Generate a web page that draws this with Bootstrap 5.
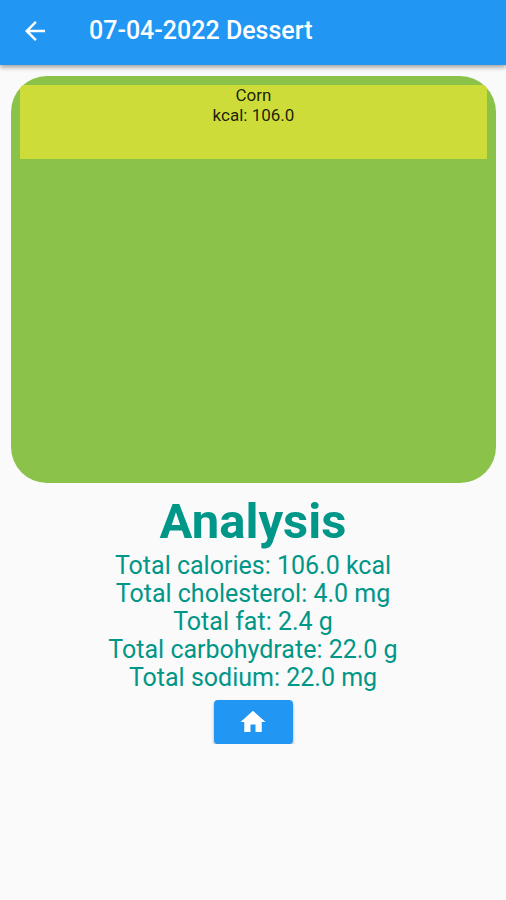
<!DOCTYPE html>
<html lang="en">
<head>
<meta charset="utf-8">
<meta name="viewport" content="width=device-width, initial-scale=1">
<title>07-04-2022 Dessert</title>
<link href="https://cdn.jsdelivr.net/npm/bootstrap@5.3.0/dist/css/bootstrap.min.css" rel="stylesheet">
<style>
body { font-family: Roboto, sans-serif; background: #fafafa; }
.app-bar { background: #2196f3; height: 65px; padding: 0 20px 3px; gap: 39px; box-shadow: 0 2px 5px rgba(0,0,0,.4); }
.app-title { font-size: 25px; line-height: 28px; font-weight: 500; }
.back-btn { width: 30px; height: 30px; }
.meal-panel { background: #8bc34a; border-radius: 36px; height: 407px; margin: 11px 10px 0 11px; padding: 9px; }
.meal-item { background: #cddc39; height: 74px; font-size: 17px; line-height: 20px; color: rgba(0,0,0,.87); }
.analysis { color: #009688; font-size: 25px; line-height: 28px; }
.analysis-title { font-size: 49px; line-height: 58px; font-weight: 700; margin: 10px 0 1px; }
.home-btn { background: #2196f3; width: 79px; height: 44px; border-radius: 4px; box-shadow: 0 2px 3px rgba(0,0,0,.35); margin-top: 8px; }
</style>
</head>
<body>
<header class="app-bar d-flex align-items-center text-white position-relative">
  <button type="button" class="back-btn btn p-0 border-0 text-white d-flex" aria-label="Back">
    <svg width="30" height="30" viewBox="0 0 24 24" fill="currentColor" aria-hidden="true"><path d="M20 11H7.83l5.59-5.59L12 4l-8 8 8 8 1.41-1.41L7.83 13H20v-2z"/></svg>
  </button>
  <h1 class="app-title mb-0">07-04-2022 Dessert</h1>
</header>
<main>
  <section class="meal-panel overflow-hidden" aria-label="Meal items">
    <div class="meal-item text-center">
      <div>Corn</div>
      <div>kcal: 106.0</div>
    </div>
  </section>
  <section class="analysis text-center">
    <h2 class="analysis-title">Analysis</h2>
    <div>Total calories: 106.0 kcal</div>
    <div>Total cholesterol: 4.0 mg</div>
    <div>Total fat: 2.4 g</div>
    <div>Total carbohydrate: 22.0 g</div>
    <div>Total sodium: 22.0 mg</div>
  </section>
  <button type="button" class="home-btn btn p-0 border-0 text-white d-flex align-items-center justify-content-center mx-auto" aria-label="Home">
    <svg width="30" height="30" viewBox="0 0 24 24" fill="currentColor" aria-hidden="true"><path d="M10 20v-6h4v6h5v-8h3L12 3 2 12h3v8z"/></svg>
  </button>
</main>
<script src="https://cdn.jsdelivr.net/npm/bootstrap@5.3.0/dist/js/bootstrap.bundle.min.js"></script>
</body>
</html>
